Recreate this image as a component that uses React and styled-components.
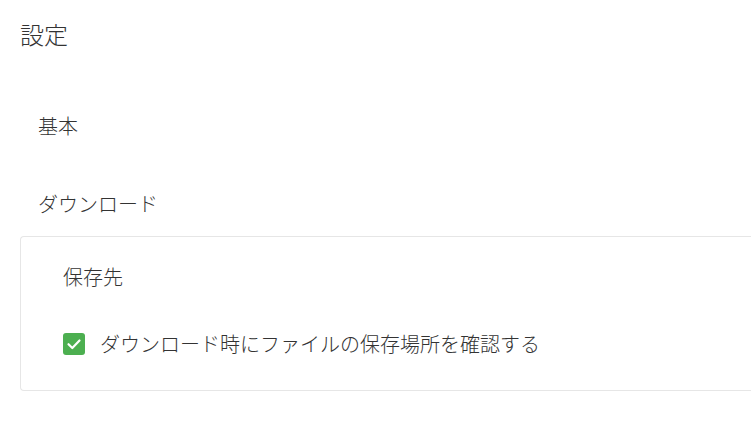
import React from "react";
import styled, { createGlobalStyle } from "styled-components";

const GlobalStyle = createGlobalStyle`
  html, body {
    margin: 0;
    padding: 0;
    background: #fff;
  }
  body {
    font-family: "Noto Sans CJK JP", "Noto Sans", sans-serif;
    font-weight: 300;
    color: #333;
  }
`;

const Page = styled.div`
  display: flex;
  flex-direction: column;
  padding-left: 20px;
`;

const Title = styled.h1`
  margin: 18px 0 0;
  font-size: 24px;
  line-height: 32px;
  font-weight: 300;
  color: #333;
`;

const SectionLabel = styled.div`
  margin-top: ${(props) => props.gap || "0"};
  padding-left: 18px;
  font-size: 20px;
  line-height: 30px;
`;

const Card = styled.div`
  margin-top: 17px;
  padding: 25px 0 31px 42px;
  border: 1px solid #e6e6e6;
  border-right: none;
  border-radius: 4px 0 0 4px;
  display: flex;
  flex-direction: column;
  gap: 37px;
`;

const CardTitle = styled.div`
  font-size: 20px;
  line-height: 30px;
`;

const CheckRow = styled.label`
  display: flex;
  align-items: center;
  gap: 15px;
  font-size: 20px;
  line-height: 30px;
  cursor: pointer;
`;

const Box = styled.span`
  width: 22px;
  height: 22px;
  border-radius: 3px;
  background: ${(props) => (props.checked ? "#4caf50" : "#fff")};
  display: flex;
  align-items: center;
  justify-content: center;
  flex-shrink: 0;
`;

export default function App() {
  return (
    <>
      <GlobalStyle />
      <Page>
        <Title>設定</Title>
        <SectionLabel gap="61px">基本</SectionLabel>
        <SectionLabel gap="48px">ダウンロード</SectionLabel>
        <Card>
          <CardTitle>保存先</CardTitle>
          <CheckRow>
            <Box checked>
              <svg width="16" height="16" viewBox="0 0 16 16" fill="none">
                <path d="M2.5 8.2 L6.3 12 L13.5 4.5" stroke="#fff" strokeWidth="2.2" strokeLinecap="round" strokeLinejoin="round" />
              </svg>
            </Box>
            ダウンロード時にファイルの保存場所を確認する
          </CheckRow>
        </Card>
      </Page>
    </>
  );
}
